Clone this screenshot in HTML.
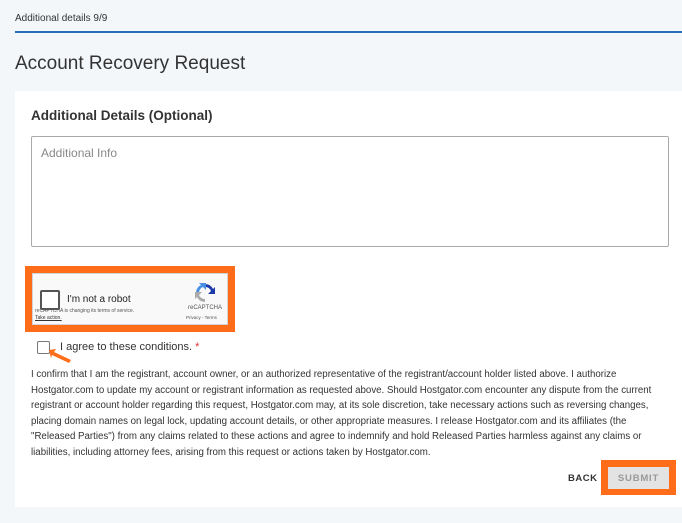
<!DOCTYPE html>
<html><head><style>
body{margin:0;width:682px;height:523px;background:#f4f7fa;font-family:"Liberation Sans",sans-serif;position:relative;overflow:hidden;color:#333}
.a{position:absolute}
</style></head><body>
<div class="a" style="left:15px;top:13px;font-size:10px;color:#333">Additional details 9/9</div>
<div class="a" style="left:15px;top:31px;width:667px;height:2px;background:#2a6ebb"></div>
<div class="a" style="left:15px;top:53px;font-size:19px;color:#333">Account Recovery Request</div>
<div class="a" style="left:15px;top:91px;width:667px;height:416px;background:#fff"></div>
<div class="a" style="left:31px;top:108px;font-size:13.5px;font-weight:bold;color:#333">Additional Details (Optional)</div>
<div class="a" style="left:31px;top:136px;width:636px;height:109px;border:1px solid #aaa;border-radius:2px"></div>
<div class="a" style="left:41px;top:146px;font-size:12px;color:#888">Additional Info</div>
<div class="a" style="left:25px;top:266px;width:210px;height:66px;background:#ff6c1a"></div>
<div class="a" style="left:32px;top:273px;width:196px;height:52px;background:#f9f9f9;border:1px solid #d3d3d3;box-sizing:border-box"></div>
<div class="a" style="left:40px;top:290px;width:16px;height:16px;border:2px solid #555;border-radius:2px;background:#fff"></div>
<div class="a" style="left:67px;top:294px;font-size:10px;color:#222">I'm not a robot</div>
<div class="a" style="left:35px;top:308px;font-size:5px;color:#555">reCAPTCHA is changing its terms of service.</div>
<div class="a" style="left:35px;top:315px;font-size:5px;color:#333;text-decoration:underline">Take action.</div>
<svg class="a" style="left:194px;top:282px" width="22" height="22" viewBox="0 0 22 22"><path d="M11 2a9 9 0 0 1 8 5l2-2v7h-7l3-3a6 6 0 0 0-6-4z" fill="#1c3aa9"/><path d="M2 11a9 9 0 0 1 5-8l-2-2h7v7l-3-3a6 6 0 0 0-4 6z" fill="#4a90e2"/><path d="M11 20a9 9 0 0 1-8-5l-2 2v-7h7l-3 3a6 6 0 0 0 6 4z" fill="#aaa"/></svg>
<div class="a" style="left:188px;top:305px;font-size:6px;color:#555">reCAPTCHA</div>
<div class="a" style="left:186px;top:315px;font-size:4.5px;color:#555">Privacy - Terms</div>
<div class="a" style="left:37px;top:341px;width:11px;height:11px;border:1px solid #777;border-radius:2px;background:#fff"></div>
<div class="a" style="left:60px;top:341px;font-size:11px;color:#333">I agree to these conditions. <span style="color:#d33">*</span></div>
<svg class="a" style="left:44px;top:344px" width="30" height="22"><path d="M5 6 L12 5 L10 8 L27 16 L25 19 L8 11 L7 14 Z" fill="#ff6c1a"/></svg>
<div class="a" style="left:31px;top:367px;width:638px;font-size:9.7px;line-height:15.6px;color:#333">I confirm that I am the registrant, account owner, or an authorized representative of the registrant/account holder listed above. I authorize Hostgator.com to update my account or registrant information as requested above. Should Hostgator.com encounter any dispute from the current registrant or account holder regarding this request, Hostgator.com may, at its sole discretion, take necessary actions such as reversing changes, placing domain names on legal lock, updating account details, or other appropriate measures. I release Hostgator.com and its affiliates (the "Released Parties") from any claims related to these actions and agree to indemnify and hold Released Parties harmless against any claims or liabilities, including attorney fees, arising from this request or actions taken by Hostgator.com.</div>
<div class="a" style="left:568px;top:473px;font-size:9.5px;font-weight:bold;letter-spacing:0.5px;color:#333">BACK</div>
<div class="a" style="left:601px;top:460px;width:75px;height:35px;background:#ff6c1a"></div>
<div class="a" style="left:608px;top:467px;width:61px;height:22px;background:#e3e3e3;font-size:9.5px;font-weight:bold;letter-spacing:0.8px;color:#999;text-align:center;line-height:23px">SUBMIT</div>
</body></html>
